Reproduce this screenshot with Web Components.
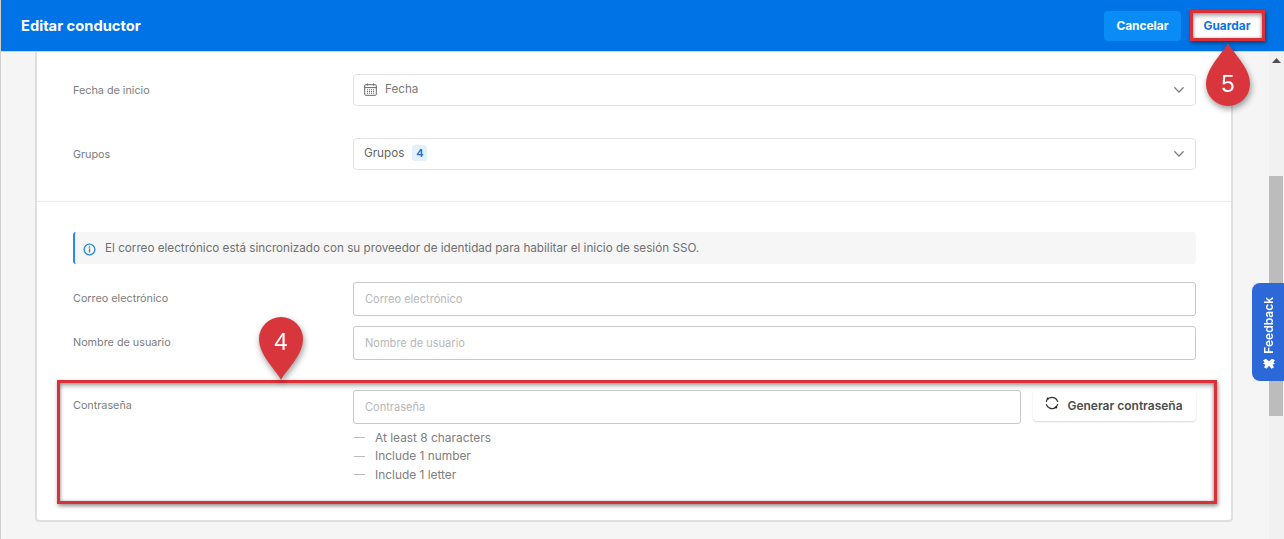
<!DOCTYPE html>
<html lang="es"><head><meta charset="utf-8"><title>Editar conductor</title>
<style>
html,body{margin:0;padding:0;height:539px;overflow:hidden;background:#f5f5f5}
body{font-family:Inter,"Noto Sans",sans-serif;-webkit-font-smoothing:antialiased}
</style></head><body>
<app-page></app-page>
<script>
const chevron='<svg width="10" height="6" viewBox="0 0 10 6" fill="none" stroke="#7d7d7d" stroke-width="1.3" stroke-linecap="round" stroke-linejoin="round"><path d="M.8.8 5 5 9.2.8"/></svg>';
const def=(name,css,html)=>{
  customElements.define(name,class extends HTMLElement{
    constructor(){super();const s=this.attachShadow({mode:'open'});
      s.innerHTML='<style>'+css+'</style>'+(typeof html==='function'?html(this):html);}
  });
};
def('top-bar',`
:host{display:flex;align-items:center;justify-content:space-between;height:51px;background:#0073e6;border-bottom:1px solid #d9d2c8;padding:0 22px 0 21px;flex:none}
h1{margin:0;font:700 14.7px/20px Inter,sans-serif;color:#fff}
.acts{display:flex;gap:11px;align-items:center}
button{font:700 11.9px/16px Inter,sans-serif;border:0;border-radius:4px;height:30px;padding:0;cursor:pointer}
.c{width:77px;background:#0a8cf7;color:#fff}
.g{width:70px;background:#fff;color:#0f73e0}
`,`<h1>Editar conductor</h1><div class="acts"><button class="c">Cancelar</button><button class="g">Guardar</button></div>`);

def('form-row',`
:host{display:grid;grid-template-columns:280px 1fr;align-items:var(--al,center);min-height:var(--h,34px)}
.l{font:400 10.8px/16px Inter,sans-serif;color:#7c7c7c;padding-top:var(--lt,0)}
`,h=>`<div class="l">${h.getAttribute('label')}</div><div><slot></slot></div>`);

def('select-box',`
:host{display:flex;align-items:center;justify-content:space-between;box-sizing:border-box;height:32px;border:1px solid #e2e2e2;border-radius:4px;background:#fff;padding:0 11px 0 var(--pl,10px);color:#666;font:400 11.7px/16px Inter,sans-serif}
.left{display:flex;align-items:center;gap:8px;position:relative;top:-1px}
`,`<div class="left"><slot></slot></div>${chevron}`);

def('text-box',`
:host{display:flex;align-items:center;box-sizing:border-box;height:34px;border:1px solid #c9c9c9;border-radius:3px;background:#fff;padding:0 11px;color:#b8b8b8;font:400 11.05px/16px Inter,sans-serif}
`,`<slot></slot>`);

def('info-note',`
:host{display:flex;align-items:center;gap:9px;height:32px;background:#f6f6f6;border-left:2px solid #2b8ae8;border-radius:3px;padding-left:9px;color:#707070;font:400 11.7px/16px Inter,sans-serif}
svg{flex:none;position:relative;top:1px;left:-1px}
span{position:relative;left:-1px}
`,`<svg width="13" height="13" viewBox="0 0 13 13" fill="none"><circle cx="6.5" cy="6.5" r="5.4" stroke="#2b8ae8" stroke-width="1.3"/><path d="M6.5 6v3" stroke="#2b8ae8" stroke-width="1.4" stroke-linecap="round"/><circle cx="6.5" cy="4" r=".85" fill="#2b8ae8"/></svg><span><slot></slot></span>`);

def('gen-button',`
:host{display:flex;align-items:center;justify-content:center;gap:7px;box-sizing:border-box;width:163px;height:31px;flex:none;background:#fff;border-radius:4px;box-shadow:0 1px 2px rgba(0,0,0,.16);color:#4d4d4d;font:600 12px/16px Inter,sans-serif;padding-right:2px}
svg{position:relative;top:-3px}
`,`<svg width="16" height="16" viewBox="0 0 16 16" fill="none" stroke="#333" stroke-width="1.2" stroke-linecap="round"><path d="M5.6 2.9A5.8 5.8 0 0 1 13.6 6.5"/><path d="M13.6 9.5A5.8 5.8 0 0 1 10.4 13.1"/><path d="M10.4 13.1A5.8 5.8 0 0 1 2.4 9.5"/><path d="M2.4 6.5A5.8 5.8 0 0 1 3.4 4.1"/><circle cx="3.9" cy="3.6" r="1.15" fill="#222" stroke="none"/><circle cx="12.1" cy="12.4" r="1.15" fill="#222" stroke="none"/></svg><span><slot></slot></span>`);

def('hint-list',`
:host{display:flex;flex-direction:column;padding-top:4.5px;color:#808080;font:400 11.9px/18.5px Inter,sans-serif}
`,`<slot></slot>`);
def('hint-item',`
:host{display:flex;align-items:center;gap:10px;padding-left:1px}
i{display:block;width:11px;height:1px;background:#bbb}
`,`<i></i><span><slot></slot></span>`);

def('scroll-rail',`
:host{display:flex;flex-direction:column;width:15px;flex:none;background:#f1f1f1;align-items:stretch}
.up{height:17px;display:flex;align-items:center;justify-content:center}
.gap{height:107px}
.thumb{height:240px;background:#bcbcbc;margin-right:1px}
`,`<div class="up"><svg width="9" height="5" viewBox="0 0 9 5"><path d="M4.5 0 9 5H0z" fill="#505050"/></svg></div><div class="gap"></div><div class="thumb"></div>`);

def('feedback-tab',`
:host{position:absolute;left:1252px;top:283px;width:32px;height:98px;background:#2d68d8;border-radius:8px 0 0 8px;display:flex;align-items:center;justify-content:center}
.t{writing-mode:vertical-rl;transform:rotate(180deg);display:flex;align-items:center;gap:5px;color:#fff;font:600 12px/16px Inter,sans-serif;position:relative;left:1px;top:1px}
svg{transform:rotate(180deg)}
`,`<div class="t"><svg width="12" height="11" viewBox="0 0 12 11" fill="#fff"><path d="M0 1.5 3 0l3 2.5L9 0l3 1.5-1.6 2L12 5 9.5 6.2 11 8.5 8.5 10 6 7.2 3.5 10 1 8.5 2.5 6.2 0 5l1.6-1.5z"/></svg><span>Feedback</span></div>`);

def('map-pin',`
:host{position:absolute;left:var(--x);top:var(--y);width:44px;height:64px;filter:drop-shadow(1px 3px 3px rgba(0,0,0,.4))}
svg{display:block;position:absolute;left:0;top:0}
span{position:absolute;left:0;right:0;top:var(--ty);text-align:center;color:#fff;font:400 24px/28px "Liberation Sans",Arial,sans-serif}
`,h=>`<svg width="44" height="64" viewBox="0 0 44 64"><path d="${h.getAttribute('dir')==='up'?'M22 0C26 9 44 24 44 41a22 22 0 0 1-44 0C0 24 18 9 22 0z':'M22 63C18 54 0 39 0 22a22 22 0 0 1 44 0C44 39 26 54 22 63z'}" fill="#d8363c"/></svg><span>${h.getAttribute('n')}</span>`);

def('mark-box',`
:host{position:absolute;left:var(--x);top:var(--y);width:var(--w);height:var(--h);box-sizing:border-box;border:3px solid #dc3038;box-shadow:1px 2px 4px rgba(0,0,0,.45),inset 0 3px 4px rgba(0,0,0,.3),inset 1px 0 3px rgba(0,0,0,.14),inset -1px 0 3px rgba(0,0,0,.14);pointer-events:none}
`,``);

def('form-card',`
:host{display:block;box-sizing:border-box;height:470px;margin:0 36px 0 35px;background:#fff;border:solid #dfdfdf;border-width:0 2px 2px 2px;border-radius:0 0 4px 4px}
.top{padding:22px 35px 0 36px;height:150px;box-sizing:border-box;border-bottom:1px solid #ececec}
.bottom{padding:30px 35px 0 36px}
`,`<div class="top"><slot name="a"></slot></div><div class="bottom"><slot name="b"></slot></div>`);

def('pass-field',`
:host{display:flex;gap:12px}
.col{flex:1}
`,`<div class="col"><text-box>Contraseña</text-box></div><gen-button>Generar contraseña</gen-button>`);

def('app-page',`
:host{display:flex;flex-direction:column;position:relative;width:1284px;height:539px;overflow:hidden;background:#f5f5f5}
.body{display:flex;flex:1;min-height:0}
.main{flex:1;min-width:0}
.badge{display:inline-flex;align-items:center;justify-content:center;width:15px;height:16px;background:#e3f1fd;border-radius:3px;color:#1f6fd6;font:600 11px/16px Inter,sans-serif}
.date{display:flex;align-items:center;gap:8px;color:#7a7a7a}
.stack{display:flex;flex-direction:column}
.bar{position:absolute;left:0;top:0;bottom:0;width:1px;background:#cfcfcf}
`,`<div class="bar"></div><top-bar></top-bar>
<div class="body"><div class="main"><form-card>
<div slot="a" class="stack" style="gap:32px">
<form-row label="Fecha de inicio" style="--h:32px;--lt:1px"><select-box><span class="date"><svg width="13" height="13" viewBox="0 0 13 13" fill="none" stroke="#666" stroke-width="1"><rect x=".7" y="1.7" width="11.6" height="10.6" rx="1"/><path d="M.7 4.6h11.6M3.5.5v2M9.5.5v2"/><path d="M3 6.8h7M3 8.5h7M3 10.2h7" stroke-dasharray="1 1"/></svg>Fecha</span></select-box></form-row>
<form-row label="Grupos" style="--h:32px;--lt:2px"><select-box><span>Grupos</span><span class="badge">4</span></select-box></form-row>
</div>
<div slot="b" class="stack">
<info-note>El correo electrónico está sincronizado con su proveedor de identidad para habilitar el inicio de sesión SSO.</info-note>
<div style="height:18px"></div>
<form-row label="Correo electrónico"><text-box>Correo electrónico</text-box></form-row>
<div style="height:10px"></div>
<form-row label="Nombre de usuario"><text-box>Nombre de usuario</text-box></form-row>
<div style="height:30px"></div>
<form-row label="Contraseña" style="--al:start;--lt:8px"><pass-field></pass-field>
<hint-list><hint-item>At least 8 characters</hint-item><hint-item>Include 1 number</hint-item><hint-item>Include 1 letter</hint-item></hint-list></form-row>
</div>
</form-card></div><scroll-rail></scroll-rail></div>
<feedback-tab></feedback-tab>
<mark-box style="--x:57px;--y:380px;--w:1160px;--h:124px"></mark-box>
<mark-box style="--x:1190px;--y:10px;--w:75px;--h:31px"></mark-box>
<map-pin n="4" style="--x:259px;--y:317px;--ty:11px"></map-pin>
<map-pin n="5" dir="up" style="--x:1206px;--y:43px;--ty:27px"></map-pin>`);
</script>
</body></html>
